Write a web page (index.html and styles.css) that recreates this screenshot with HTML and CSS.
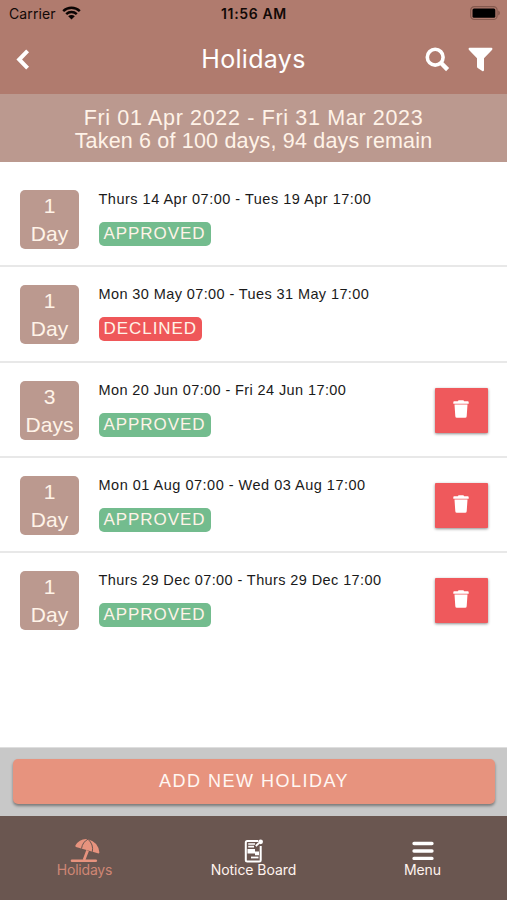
FILE: index.html
```html
<!DOCTYPE html>
<html lang="en">
<head>
<meta charset="utf-8">
<title>Holidays</title>
<link rel="stylesheet" href="styles.css">
</head>
<body>
<svg class="defs" width="0" height="0" aria-hidden="true">
  <symbol id="trash" viewBox="0 0 16 18">
    <path d="M0.3 2.2Q0.3 1.3 1.2 1.3H4.8L5.6 0.3H10.4L11.2 1.3H14.8Q15.7 1.3 15.7 2.2V3.7H0.3ZM1.5 4.6H14.5L13.7 16.2Q13.6 17.7 12.1 17.7H3.9Q2.4 17.7 2.3 16.2Z"/>
  </symbol>
</svg>
<div class="app">
  <header class="header">
    <div class="status">
      <div class="carrier">
        <span>Carrier</span>
        <svg width="19" height="14" viewBox="0 0 19 14">
          <path d="M1.2 5.1A12.2 12.2 0 0 1 17.8 5.1M4.2 8.1A7.9 7.9 0 0 1 14.8 8.1" fill="none" stroke="#0b0504" stroke-width="2.5"/>
          <path d="M9.5 13.6L6.2 10.3A4.7 4.7 0 0 1 12.8 10.3Z" fill="#0b0504"/>
        </svg>
      </div>
      <div class="time">11:56 AM</div>
      <svg class="battery" width="31" height="15" viewBox="0 0 31 15">
        <rect x="0.7" y="0.7" width="26.4" height="12.8" rx="3.6" fill="none" stroke="#85594e" stroke-width="1.2"/>
        <rect x="2.5" y="2.5" width="22.8" height="9.2" rx="1.5" fill="#000"/>
        <path d="M28.2 4.6Q30 5.4 30 7.1Q30 8.8 28.2 9.6Z" fill="#85594e"/>
      </svg>
    </div>
    <nav class="titlebar">
      <svg class="back" width="14" height="21" viewBox="0 0 14 21"><path d="M11.6 1.8L3.2 10.5L11.6 19.2" fill="none" stroke="#fff" stroke-width="4"/></svg>
      <h1>Holidays</h1>
      <div class="tools">
        <svg width="25" height="25" viewBox="0 0 25 25"><circle cx="10.2" cy="10.2" r="7.9" fill="none" stroke="#fff" stroke-width="3.6"/><path d="M15.8 15.8L22.6 22.6" stroke="#fff" stroke-width="4.4"/></svg>
        <svg width="25" height="25" viewBox="0 0 25 25"><path d="M1.3 0.8H23.7Q25 1.5 24.2 2.7L16 11.2V23.2Q15.6 24.7 14.2 24L9.7 20.9Q9 20.4 9 19.4V11.2L0.8 2.7Q0 1.5 1.3 0.8Z" fill="#fff"/></svg>
      </div>
    </nav>
  </header>
  <section class="summary">
    <p class="period">Fri 01 Apr 2022 - Fri 31 Mar 2023</p>
    <p class="taken">Taken 6 of 100 days, 94 days remain</p>
  </section>
  <main class="list">
    <article class="row">
      <div class="tile"><span>1</span><span>Day</span></div>
      <div class="info"><p class="wide">Thurs 14 Apr 07:00 - Tues 19 Apr 17:00</p><span class="tag approved">APPROVED</span></div>
    </article>
    <article class="row">
      <div class="tile"><span>1</span><span>Day</span></div>
      <div class="info"><p>Mon 30 May 07:00 - Tues 31 May 17:00</p><span class="tag declined">DECLINED</span></div>
    </article>
    <article class="row">
      <div class="tile"><span>3</span><span>Days</span></div>
      <div class="info"><p>Mon 20 Jun 07:00 - Fri 24 Jun 17:00</p><span class="tag approved">APPROVED</span></div>
      <button class="delete" aria-label="Delete"><svg width="16" height="18"><use href="#trash"/></svg></button>
    </article>
    <article class="row">
      <div class="tile"><span>1</span><span>Day</span></div>
      <div class="info"><p class="wide">Mon 01 Aug 07:00 - Wed 03 Aug 17:00</p><span class="tag approved">APPROVED</span></div>
      <button class="delete" aria-label="Delete"><svg width="16" height="18"><use href="#trash"/></svg></button>
    </article>
    <article class="row">
      <div class="tile"><span>1</span><span>Day</span></div>
      <div class="info"><p>Thurs 29 Dec 07:00 - Thurs 29 Dec 17:00</p><span class="tag approved">APPROVED</span></div>
      <button class="delete" aria-label="Delete"><svg width="16" height="18"><use href="#trash"/></svg></button>
    </article>
  </main>
  <div class="action"><button class="add">ADD NEW HOLIDAY</button></div>
  <nav class="tabs">
    <a class="tab active">
      <svg width="30" height="26" viewBox="0 0 30 26">
        <path d="M2 22.7H25.8" stroke="#e7937e" stroke-width="2.6" stroke-linecap="round"/>
        <path d="M17.6 12.5L14 22" stroke="#e7937e" stroke-width="2.7"/>
        <path d="M5.4 7.6Q9.7 0.2 18 1.2Q28.5 4 29.4 14.6Q29 15.8 27.8 15.3L6 9Q5 8.5 5.4 7.6Z" fill="#e7937e"/>
        <path d="M18 1.2Q12.5 4 11.5 10.6M18 1.2Q23.8 6.5 22.3 13.8" fill="none" stroke="#6a5650" stroke-width="1"/>
      </svg>
      <span>Holidays</span>
    </a>
    <a class="tab">
      <svg width="22" height="26" viewBox="0 0 22 26">
        <path d="M15 3H4.3Q2.8 3 2.8 4.5V22Q2.8 23.5 4.3 23.5H16.2Q17.7 23.5 17.7 22V8" fill="none" stroke="#fff" stroke-width="2"/>
        <path d="M5.2 6H12M5.2 8.6H11" stroke="#fff" stroke-width="1.6"/>
        <path d="M4.5 11H12V15.5H4.5ZM12 13.5H16V17.2H12Z" fill="#fff"/>
        <path d="M8 19.5H15.5" stroke="#fff" stroke-width="1.8"/>
        <circle cx="17.6" cy="3.8" r="2.4" fill="#fff"/><path d="M12.8 8L16 5" stroke="#fff" stroke-width="1.8"/>
      </svg>
      <span>Notice Board</span>
    </a>
    <a class="tab">
      <svg width="22" height="26" viewBox="0 0 22 26"><path d="M2 5.5H20M2 13H20M2 20.4H20" stroke="#fff" stroke-width="3.3" stroke-linecap="round"/></svg>
      <span>Menu</span>
    </a>
  </nav>
</div>
</body>
</html>
```
FILE: styles.css
```css
* { box-sizing: border-box; }
body { margin: 0; background: #fff; font-family: "Liberation Sans", Arial, sans-serif; }
h1, p { margin: 0; font-weight: 400; white-space: nowrap; }
button { border: 0; padding: 0; font: inherit; color: inherit; }
svg { display: block; flex: none; }
.defs { position: absolute; }
.app { width: 507px; height: 900px; display: flex; flex-direction: column; overflow: hidden; }
.header { height: 94px; background: #b07b6e; font-family: Inter, sans-serif; }
.status { height: 28px; padding: 0 6px 0 9px; display: grid; grid-template-columns: 1fr auto 1fr; align-items: center; color: #120907; }
.carrier { display: flex; align-items: center; gap: 6px; font-size: 14px; letter-spacing: 0.1px; margin-top: -2px; }
.time { font-size: 14px; font-weight: 600; letter-spacing: 0.65px; margin: -2px 0 0 -2px; }
.battery { justify-self: end; margin-top: -2px; }
.titlebar { height: 66px; padding: 0 14px 4px 16px; display: grid; grid-template-columns: 1fr auto 1fr; align-items: center; color: #fff; }
.titlebar h1 { font-size: 25px; line-height: 30px; letter-spacing: 0.3px; margin-left: -2px; }
.tools { justify-self: end; display: flex; gap: 18px; }
.summary { height: 68px; padding-top: 13px; background: #bb998f; color: #fff3e8; text-align: center; font-size: 21.5px; line-height: 23px; }
.period { letter-spacing: 0.66px; }
.taken { letter-spacing: 0.18px; }
.list { flex: 1; padding-top: 10px; }
.row { height: 95.3px; padding: 0 19.5px 0 20px; display: flex; align-items: center; border-bottom: 2px solid #e8e8e8; }
.row:last-child { border-color: transparent; }
.tile { width: 59px; height: 59px; margin-top: 2px; border-radius: 5px; background: #bb998f; color: #fff3e8; display: flex; flex-direction: column; align-items: center; padding-top: 2px; font-size: 21px; line-height: 28px; }
.info { flex: 1; margin: -1px 0 0 19.5px; }
.info p { font-size: 14.5px; line-height: 18px; letter-spacing: 0.4px; color: #1a1a1a; margin-bottom: 14px; }
.info .wide { letter-spacing: 0.5px; }
.tag { display: block; width: 112px; height: 24px; border-radius: 5px; padding-left: 5px; font-size: 17px; line-height: 23px; letter-spacing: 0.95px; color: #fff3e8; }
.approved { background: #73bc8e; }
.declined { width: 103px; background: #ef5759; }
.delete { width: 53px; height: 45px; margin-top: 2px; border-radius: 1px; display: flex; align-items: center; justify-content: center; background: #ef595c; fill: #fff; box-shadow: 0 1px 3px rgba(0, 0, 0, .45); }
.delete svg { margin: -3px 1px 0 0; }
.action { height: 69px; padding: 11px 12px 0 13px; background: #c8c8c8; border-top: 1px solid #dedede; }
.add { display: block; width: 482px; height: 45px; border-radius: 5px; background: #e7937e; color: #fff7f3; font-size: 18px; letter-spacing: 1.5px; box-shadow: 0 2px 3px rgba(0, 0, 0, .4); }
.tabs { height: 84px; padding-top: 22px; background: #6a5650; display: grid; grid-template-columns: repeat(3, 1fr); color: #fff3ee; font-size: 14px; line-height: 15px; letter-spacing: -0.05px; font-family: Inter, sans-serif; }
.tab { display: flex; flex-direction: column; align-items: center; }
.tab span { margin-top: -2px; }
.active { color: #cf8675; letter-spacing: -0.2px; }
```
